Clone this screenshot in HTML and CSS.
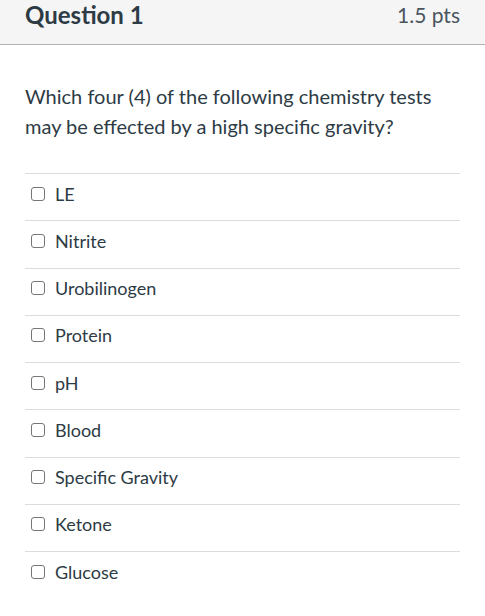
FILE: index.html
```html
<!DOCTYPE html>
<html>
<head>
<meta charset="utf-8">
<link rel="stylesheet" href="styles.css">
</head>
<body>
<div class="question">
  <div class="header">
    <span class="title">Question 1</span>
    <span class="pts">1.5 pts</span>
  </div>
  <div class="body">
    <p class="text">Which four (4) of the following chemistry tests may be effected by a high specific gravity?</p>
    <ul class="answers">
      <li class="answer"><span class="box"></span><span class="label">LE</span></li>
      <li class="answer"><span class="box"></span><span class="label">Nitrite</span></li>
      <li class="answer"><span class="box"></span><span class="label">Urobilinogen</span></li>
      <li class="answer"><span class="box"></span><span class="label">Protein</span></li>
      <li class="answer"><span class="box"></span><span class="label">pH</span></li>
      <li class="answer"><span class="box"></span><span class="label">Blood</span></li>
      <li class="answer"><span class="box"></span><span class="label">Specific Gravity</span></li>
      <li class="answer"><span class="box"></span><span class="label">Ketone</span></li>
      <li class="answer"><span class="box"></span><span class="label">Glucose</span></li>
    </ul>
  </div>
</div>
</body>
</html>
```
FILE: styles.css
```css
html, body {
  margin: 0;
  padding: 0;
  background: #ffffff;
  font-family: Lato, "Liberation Sans", sans-serif;
  color: #2d3b45;
}
.question {
  width: 485px;
}
.header {
  height: 44px;
  background: #f5f5f5;
  border-bottom: 1px solid #b3b3b3;
  display: flex;
  justify-content: space-between;
  align-items: flex-start;
  padding: 0 25px 0 25px;
  box-sizing: content-box;
}
.title {
  font-size: 24px;
  font-weight: 700;
  line-height: 30px;
  color: #2d3b45;
}
.pts {
  font-size: 21px;
  font-weight: 400;
  line-height: 30px;
  color: #4a5560;
}
.body {
  padding: 36px 25px 0 25px;
}
.text {
  margin: 0 0 32px 0;
  font-size: 20px;
  line-height: 30px;
  color: #2d3b45;
}
.answers {
  list-style: none;
  margin: 0;
  padding: 0;
}
.answer {
  border-top: 1px solid #dcdcdc;
  display: flex;
  align-items: center;
  padding-left: 6px;
  padding-bottom: 7px;
  box-sizing: border-box;
  height: 47.25px;
}
.box {
  width: 12px;
  height: 12px;
  border: 1.5px solid #767676;
  border-radius: 3px;
  margin-right: 10px;
  flex: none;
}
.label {
  font-size: 18px;
  color: #2d3b45;
}
```
